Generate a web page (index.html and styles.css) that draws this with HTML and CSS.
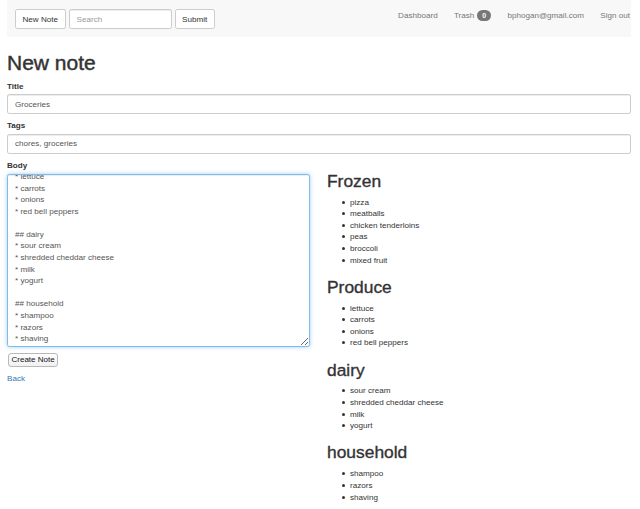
FILE: index.html
```
<!DOCTYPE html>
<html lang="en">
<head>
<meta charset="utf-8">
<title>New note</title>
<link rel="stylesheet" href="styles.css">
</head>
<body>
<div class="page">
  <nav class="navbar">
    <form class="nav-form">
      <button type="button" class="btn">New Note</button>
      <input type="text" class="nav-search" placeholder="Search">
      <button type="button" class="btn">Submit</button>
    </form>
    <ul class="nav-links">
      <li><a href="#">Dashboard</a></li>
      <li><a href="#">Trash <span class="badge">0</span></a></li>
      <li><a href="#">bphogan@gmail.com</a></li>
      <li><a href="#">Sign out</a></li>
    </ul>
  </nav>

  <h1 class="title">New note</h1>

  <form class="note-form">
    <div class="form-group">
      <label class="label" for="title">Title</label>
      <input id="title" class="control" type="text" value="Groceries">
    </div>
    <div class="form-group">
      <label class="label" for="tags">Tags</label>
      <input id="tags" class="control" type="text" value="chores, groceries">
    </div>
    <div class="row">
      <div class="col-left">
        <div class="form-group">
          <label class="label" for="body">Body</label>
          <textarea id="body" class="control body-area">## Frozen
* pizza
* meatballs
* chicken tenderloins
* peas
* broccoli
* mixed fruit

## Produce
* lettuce
* carrots
* onions
* red bell peppers

## dairy
* sour cream
* shredded cheddar cheese
* milk
* yogurt

## household
* shampoo
* razors
* shaving</textarea>
        </div>
        <button type="button" class="native-btn">Create Note</button>
        <a class="back" href="#">Back</a>
      </div>
      <div class="col-right">
        <h2 class="preview-h">Frozen</h2>
        <ul class="preview-list">
          <li>pizza</li>
          <li>meatballs</li>
          <li>chicken tenderloins</li>
          <li>peas</li>
          <li>broccoli</li>
          <li>mixed fruit</li>
        </ul>
        <h2 class="preview-h">Produce</h2>
        <ul class="preview-list">
          <li>lettuce</li>
          <li>carrots</li>
          <li>onions</li>
          <li>red bell peppers</li>
        </ul>
        <h2 class="preview-h">dairy</h2>
        <ul class="preview-list">
          <li>sour cream</li>
          <li>shredded cheddar cheese</li>
          <li>milk</li>
          <li>yogurt</li>
        </ul>
        <h2 class="preview-h">household</h2>
        <ul class="preview-list">
          <li>shampoo</li>
          <li>razors</li>
          <li>shaving</li>
        </ul>
      </div>
    </div>
  </form>
</div>
<script src="script.js"></script>
</body>
</html>
```

FILE: styles.css
```
* { box-sizing: border-box; }
html, body { margin: 0; padding: 0; background: #fff; }
body {
  font-family: "Liberation Sans", Arial, Helvetica, sans-serif;
  font-size: 8.1px;
  line-height: 11.6px;
  color: #333;
}
.page {
  width: 624px;
  margin-left: 7px;
}
.navbar {
  display: flex;
  height: 37px;
  background: #f8f8f8;
  padding: 9px 1px 0 8px;
}
.nav-form {
  display: flex;
  gap: 3px;
  margin: 0;
  height: 20px;
}
.btn {
  font-family: inherit;
  font-size: 8.1px;
  height: 20px;
  padding: 0 6.5px;
  background: #fff;
  border: 1px solid #ccc;
  border-radius: 2.3px;
  color: #333;
}
.nav-search {
  width: 103px;
  height: 20px;
  font-family: inherit;
  font-size: 8.1px;
  padding: 0 7px;
  border: 1px solid #ccc;
  border-radius: 2.3px;
  box-shadow: inset 0 1px 1px rgba(0,0,0,.075);
  color: #555;
}
.nav-search::placeholder { color: #999; }
.nav-links {
  list-style: none;
  margin: 0 0 0 auto;
  padding: 1px 0 0;
  display: flex;
  gap: 16.3px;
}
.nav-links a {
  color: #777;
  text-decoration: none;
}
.badge {
  display: inline-block;
  margin-left: 0.5px;
  min-width: 14px;
  height: 11px;
  line-height: 11px;
  padding: 0 4.5px;
  border-radius: 6px;
  background: #777;
  color: #fff;
  font-size: 7px;
  font-weight: bold;
  text-align: center;
}
.title {
  margin: 13.6px 0 7px;
  font-size: 21px;
  line-height: 23.1px;
  font-weight: 500;
  color: #333;
  -webkit-text-stroke: 0.45px #333;
}
.note-form { margin: 0; }
.form-group { margin-bottom: 6.5px; }
.label {
  display: block;
  font-weight: bold;
  line-height: 11px;
  margin-bottom: 2.5px;
}
.control {
  display: block;
  width: 100%;
  height: 19.7px;
  padding: 0 7px;
  font-family: inherit;
  font-size: 8.1px;
  color: #555;
  background: #fff;
  border: 1px solid #ccc;
  border-radius: 2.3px;
  box-shadow: inset 0 1px 1px rgba(0,0,0,.075);
  outline: none;
}
.row {
  display: grid;
  grid-template-columns: 303px 1fr;
  column-gap: 17px;
}
.body-area {
  height: 173px;
  padding: 3px 7px 1px;
  line-height: 11.6px;
  resize: vertical;
  border-color: #7fbcec;
  box-shadow: inset 0 1px 1px rgba(0,0,0,.075), 0 0 4.6px rgba(102,175,233,.6);
  scrollbar-width: none;
  overflow-y: auto;
}
.native-btn {
  display: block;
  margin-left: 1px;
  height: 14px;
  padding: 0 2.5px;
  font-family: inherit;
  font-size: 8px;
  line-height: 12px;
  color: #111;
  background: linear-gradient(#ffffff, #f1f1f1);
  border: 1px solid #b8b8b8;
  border-radius: 3px;
}
.back {
  display: inline-block;
  margin-top: 6px;
  color: #337ab7;
  text-decoration: none;
}
.preview-h {
  margin: 11.6px 0 5.8px;
  font-size: 17.4px;
  line-height: 19.1px;
  font-weight: 500;
  color: #333;
  -webkit-text-stroke: 0.35px #333;
}
.preview-list {
  margin: 0 0 5.8px;
  padding-left: 23px;
  list-style: none;
}
.preview-list li {
  position: relative;
  line-height: 11.6px;
}
.preview-list li::before {
  content: "";
  position: absolute;
  left: -8px;
  top: 4px;
  width: 3px;
  height: 3px;
  border-radius: 50%;
  background: #333;
}
```

FILE: script.js
```
var area = document.getElementById('body');
area.scrollTop = area.scrollHeight;
```
